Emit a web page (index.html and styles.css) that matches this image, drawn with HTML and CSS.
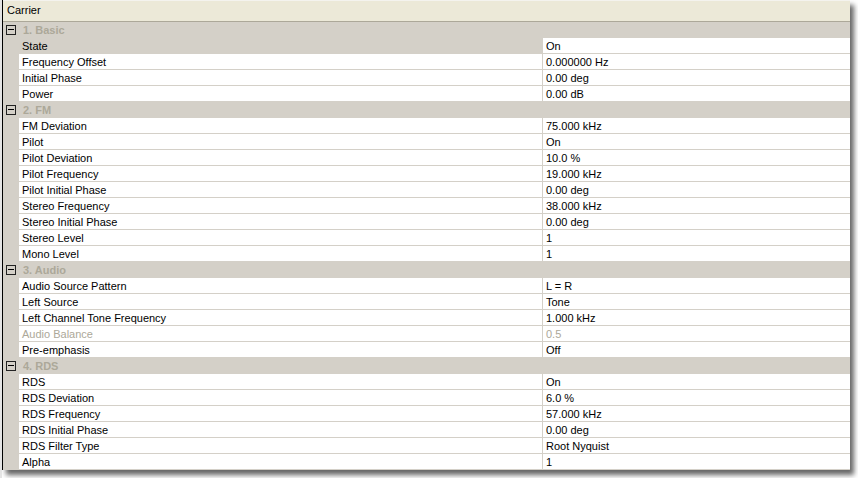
FILE: index.html
```html
<!DOCTYPE html>
<html>
<head>
<meta charset="utf-8">
<link rel="stylesheet" href="styles.css">
</head>
<body>
<div class="window">
  <div class="header">Carrier</div>
  <div class="grid">
    <div class="cat"><span class="gut"><span class="box"></span></span><span class="cname">1. Basic</span></div>
    <div class="row sel"><span class="gut"></span><span class="name">State</span><span class="val">On</span></div>
    <div class="row"><span class="gut"></span><span class="name">Frequency Offset</span><span class="val">0.000000 Hz</span></div>
    <div class="row"><span class="gut"></span><span class="name">Initial Phase</span><span class="val">0.00 deg</span></div>
    <div class="row"><span class="gut"></span><span class="name">Power</span><span class="val">0.00 dB</span></div>

    <div class="cat"><span class="gut"><span class="box"></span></span><span class="cname">2. FM</span></div>
    <div class="row"><span class="gut"></span><span class="name">FM Deviation</span><span class="val">75.000 kHz</span></div>
    <div class="row"><span class="gut"></span><span class="name">Pilot</span><span class="val">On</span></div>
    <div class="row"><span class="gut"></span><span class="name">Pilot Deviation</span><span class="val">10.0 %</span></div>
    <div class="row"><span class="gut"></span><span class="name">Pilot Frequency</span><span class="val">19.000 kHz</span></div>
    <div class="row"><span class="gut"></span><span class="name">Pilot Initial Phase</span><span class="val">0.00 deg</span></div>
    <div class="row"><span class="gut"></span><span class="name">Stereo Frequency</span><span class="val">38.000 kHz</span></div>
    <div class="row"><span class="gut"></span><span class="name">Stereo Initial Phase</span><span class="val">0.00 deg</span></div>
    <div class="row"><span class="gut"></span><span class="name">Stereo Level</span><span class="val">1</span></div>
    <div class="row"><span class="gut"></span><span class="name">Mono Level</span><span class="val">1</span></div>

    <div class="cat"><span class="gut"><span class="box"></span></span><span class="cname">3. Audio</span></div>
    <div class="row"><span class="gut"></span><span class="name">Audio Source Pattern</span><span class="val">L = R</span></div>
    <div class="row"><span class="gut"></span><span class="name">Left Source</span><span class="val">Tone</span></div>
    <div class="row"><span class="gut"></span><span class="name">Left Channel Tone Frequency</span><span class="val">1.000 kHz</span></div>
    <div class="row dis"><span class="gut"></span><span class="name">Audio Balance</span><span class="val">0.5</span></div>
    <div class="row"><span class="gut"></span><span class="name">Pre-emphasis</span><span class="val">Off</span></div>

    <div class="cat"><span class="gut"><span class="box"></span></span><span class="cname">4. RDS</span></div>
    <div class="row"><span class="gut"></span><span class="name">RDS</span><span class="val">On</span></div>
    <div class="row"><span class="gut"></span><span class="name">RDS Deviation</span><span class="val">6.0 %</span></div>
    <div class="row"><span class="gut"></span><span class="name">RDS Frequency</span><span class="val">57.000 kHz</span></div>
    <div class="row"><span class="gut"></span><span class="name">RDS Initial Phase</span><span class="val">0.00 deg</span></div>
    <div class="row"><span class="gut"></span><span class="name">RDS Filter Type</span><span class="val">Root Nyquist</span></div>
    <div class="row"><span class="gut"></span><span class="name">Alpha</span><span class="val">1</span></div>
  </div>
</div>
</body>
</html>
```
FILE: styles.css
```css
html, body {
  margin: 0;
  padding: 0;
  background: #ffffff;
}
body {
  font-family: "Liberation Sans", Arial, sans-serif;
  font-size: 11px;
  color: #000;
  width: 858px;
  height: 478px;
  overflow: hidden;
  border-left: 2px solid #e4e4e4;
  box-sizing: border-box;
}
.window {
  width: 848px;
  border-left: 1px solid #000;
  box-sizing: border-box;
  box-shadow: 4px 5px 5px rgba(0, 0, 0, 0.6);
  background: #fff;
}
.header {
  height: 22px;
  line-height: 19px;
  background: #ece9d8;
  border-top: 1px solid #f4f3ee;
  border-bottom: 1px solid #aca899;
  padding-left: 4px;
  box-sizing: border-box;
}
.grid {
  display: flex;
  flex-direction: column;
}
.row, .cat {
  display: grid;
  grid-template-columns: 16px 523px 308px;
  height: 16px;
  line-height: 16px;
}
.cat {
  grid-template-columns: 16px 1fr;
  background: #d4d0c8;
}
.gut {
  background: #d4d0c8;
  position: relative;
}
.box {
  position: absolute;
  left: 3px;
  top: 3px;
  width: 10px;
  height: 10px;
  border: 1px solid #222;
  box-sizing: border-box;
}
.box::after {
  content: "";
  position: absolute;
  left: 1px;
  top: 3px;
  width: 6px;
  height: 1px;
  background: #000;
}
.cname {
  font-weight: bold;
  color: #aca899;
  padding-left: 4px;
}
.name, .val {
  border-bottom: 1px solid #d4d0c8;
  white-space: nowrap;
  overflow: hidden;
  line-height: 16px;
}
.name {
  padding-left: 3px;
}
.val {
  border-left: 1px solid #d4d0c8;
  padding-left: 3px;
}
.sel .name {
  background: #d4d0c8;
}
.dis .name, .dis .val {
  color: #aca899;
}
```
